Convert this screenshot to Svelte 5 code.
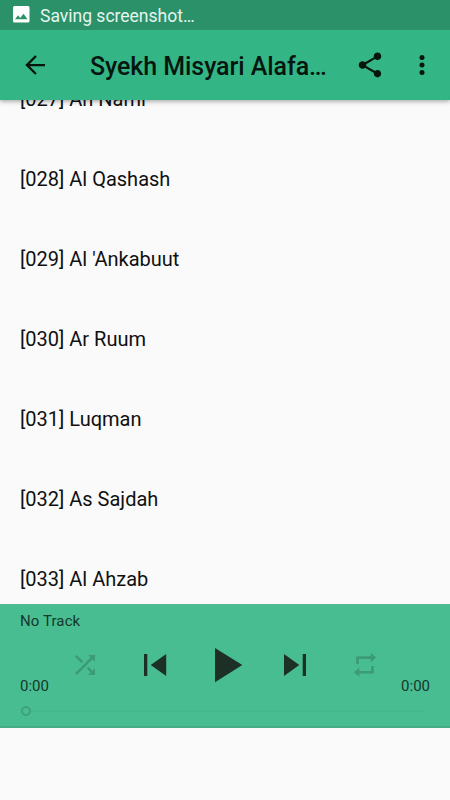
<script>
  let title = 'Syekh Misyari Alafa…';

  let tracks = [
    { number: '027', name: 'An Naml' },
    { number: '028', name: 'Al Qashash' },
    { number: '029', name: "Al 'Ankabuut" },
    { number: '030', name: 'Ar Ruum' },
    { number: '031', name: 'Luqman' },
    { number: '032', name: 'As Sajdah' },
    { number: '033', name: 'Al Ahzab' }
  ];
</script>

<div class="screen">
  <div class="status">
    <svg width="18" height="18" viewBox="0 0 18 18">
      <path fill="#fff" fill-rule="evenodd" d="M2.500 1h13.500a1.500 1.500 0 0 1 1.500 1.500v13.500a1.500 1.500 0 0 1-1.500 1.500H2.500a1.500 1.500 0 0 1-1.500-1.500V2.500A1.500 1.500 0 0 1 2.500 1zM6 10.200L3 14.200h12.500L11.500 8.800l-3.200 4.200z" />
    </svg>
    <span>Saving screenshot…</span>
  </div>

  <header>
    <button class="back" aria-label="Back">
      <svg width="30" height="30" viewBox="0 0 24 24">
        <path d="M20 11.100H7.830l5.590-5.690L12.100 4.200 4.200 12l7.900 7.800 1.310-1.210L7.830 12.900H20v-1.800z" />
      </svg>
    </button>
    <h1>{title}</h1>
    <button class="share" aria-label="Share">
      <svg width="30" height="30" viewBox="0 0 24 24">
        <path d="M18 16.080c-.76 0-1.440.3-1.960.77L8.910 12.700c.05-.23.09-.46.09-.7s-.04-.47-.09-.7l7.050-4.110c.54.5 1.250.81 2.040.81 1.660 0 3-1.340 3-3s-1.340-3-3-3-3 1.340-3 3c0 .24.04.47.09.7L8.040 9.810C7.500 9.310 6.790 9 6 9c-1.660 0-3 1.340-3 3s1.340 3 3 3c.79 0 1.500-.31 2.040-.81l7.120 4.160c-.05.21-.08.43-.08.65 0 1.610 1.310 2.920 2.920 2.920s2.920-1.310 2.920-2.920-1.310-2.920-2.920-2.920z" />
      </svg>
    </button>
    <button class="more" aria-label="More options">
      <svg width="30" height="30" viewBox="0 0 24 24">
        <circle cx="12" cy="6" r="2" />
        <circle cx="12" cy="12" r="2" />
        <circle cx="12" cy="18" r="2" />
      </svg>
    </button>
  </header>

  <ul>
    {#each tracks as track}
      <li>[{track.number}] {track.name}</li>
    {/each}
  </ul>

  <section class="player">
    <div class="now">No Track</div>
    <div class="controls">
      <span class="time">0:00</span>
      <div class="buttons">
        <svg class="off" width="30" height="30" viewBox="0 0 24 24">
          <path d="M10.590 9.170L5.410 4 4 5.410l5.170 5.170 1.420-1.410zM14.500 4l2.040 2.040L4 18.590 5.410 20 17.960 7.460 20 9.500V4h-5.500zm.33 9.410l-1.410 1.410 3.130 3.130L14.500 20H20v-5.500l-2.040 2.040-3.130-3.130z" />
        </svg>
        <svg width="30" height="40" viewBox="0 0 30 40">
          <path d="M4 9h3.300v22H4zM26.200 9v22L10.700 20z" />
        </svg>
        <svg width="30" height="40" viewBox="0 0 30 40">
          <path d="M5 3v34.300L32.300 20z" />
        </svg>
        <svg width="30" height="40" viewBox="0 0 30 40">
          <path d="M26 9h-3.300v22H26zM4 9v22L19.300 20z" />
        </svg>
        <svg class="off" width="30" height="30" viewBox="0 0 30 30">
          <path d="M6.200 14V6.300h14.500V2.800l5.300 4.800-5.300 4.800V8.900H8.800V14zM23.800 16v7.600H9.300v3.500L4 22.300l5.300-4.800V21h11.900v-5z" />
        </svg>
      </div>
      <span class="time">0:00</span>
    </div>
    <div class="seek">
      <span class="thumb"></span>
      <span class="line"></span>
    </div>
  </section>
</div>

<style>
  :global(body) {
    margin: 0;
  }

  .screen {
    display: flex;
    flex-direction: column;
    width: 450px;
    height: 800px;
    overflow: hidden;
    background: #fafafa;
    color: #101010;
    font-family: Roboto, sans-serif;
  }

  .status {
    display: flex;
    align-items: center;
    flex: none;
    z-index: 2;
    gap: 10px;
    height: 30px;
    box-sizing: border-box;
    padding: 0 0 0 12px;
    background: #2a9169;
    color: #e6f5ee;
    font-size: 17.5px;
  }

  .status svg {
    margin-top: -3px;
  }

  .status span {
    padding-top: 2px;
  }

  header {
    display: flex;
    align-items: center;
    flex: none;
    z-index: 1;
    height: 70px;
    padding-left: 20px;
    background: #34b586;
    box-shadow: 0 1px 5px rgba(0, 0, 0, 0.4);
  }

  button {
    display: flex;
    padding: 0;
    border: 0;
    background: none;
  }

  header svg {
    fill: #06160f;
  }

  h1 {
    width: 240px;
    margin: 3px 0 0 40px;
    color: #06160f;
    font-size: 25px;
    font-weight: 500;
    line-height: 30px;
    letter-spacing: -0.08px;
    white-space: nowrap;
  }

  .share {
    margin-left: 25px;
  }

  .more {
    margin-left: 22px;
  }

  ul {
    height: 504px;
    margin: 0;
    padding: 0;
    overflow: hidden;
    list-style: none;
  }

  li {
    height: 80px;
    padding-left: 20px;
    font-size: 20px;
    line-height: 80px;
  }

  li:first-child {
    margin-top: -41.5px;
  }

  .player {
    flex: none;
    height: 124px;
    box-sizing: border-box;
    border-top: 1px solid #55b692;
    border-bottom: 2px solid #45ac84;
    background: #49bd92;
    color: #14382a;
  }

  .now {
    height: 40px;
    padding: 7px 20px 0;
    box-sizing: border-box;
    font-size: 15px;
    line-height: 18px;
    letter-spacing: 0.1px;
  }

  .controls {
    display: flex;
    justify-content: space-between;
    height: 50px;
    padding: 0 20px;
  }

  .buttons {
    display: flex;
    align-items: center;
    gap: 40px;
    height: 40px;
  }

  .buttons svg {
    overflow: visible;
    fill: #1c3027;
  }

  .buttons .off {
    fill: #3c9a76;
  }

  .time {
    align-self: flex-end;
    font-size: 15px;
    line-height: 18px;
  }

  .seek {
    display: flex;
    align-items: center;
    height: 32px;
    padding: 0 25px 0 21px;
  }

  .thumb {
    width: 6px;
    height: 6px;
    border: 2px solid #3da27b;
    border-radius: 50%;
  }

  .line {
    flex: 1;
    height: 2px;
    background: #46b88d;
  }
</style>
